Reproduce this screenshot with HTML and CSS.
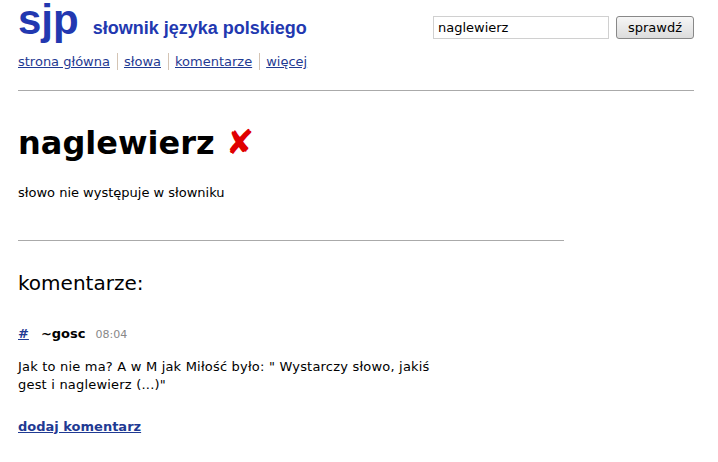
FILE: index.html
```html
<!DOCTYPE html>
<html lang="pl">
<head>
  <meta charset="UTF-8" />
  <title>naglewierz - słownik języka polskiego</title>
  <link rel="stylesheet" href="styles.css">
</head>
<body>
  <div class="page">
    <div class="header">
      <div class="brand">
        <div class="logo-row">
          <a class="logo" href="#">sjp</a>
          <span class="tagline">słownik języka polskiego</span>
        </div>
        <div class="nav">
          <a href="#">strona główna</a>
          <a href="#">słowa</a>
          <a href="#">komentarze</a>
          <a href="#">więcej</a>
        </div>
      </div>
      <form class="search" onsubmit="return false">
        <input type="text" value="naglewierz" />
        <button type="submit">sprawdź</button>
      </form>
    </div>
    <hr class="rule" />

    <h1 class="word">naglewierz <span class="cross">✘</span></h1>
    <p class="status">słowo nie występuje w słowniku</p>

    <hr class="rule short" />

    <h2 class="comments-title">komentarze:</h2>

    <div class="comment">
      <div class="comment-head">
        <a class="anchor" href="#">#</a>
        <span class="author">~gosc</span>
        <span class="time">08:04</span>
      </div>
      <p class="comment-body">Jak to nie ma? A w M jak Miłość było: " Wystarczy słowo, jakiś gest i naglewierz (...)"</p>
    </div>

    <a class="add-comment" href="#">dodaj komentarz</a>
  </div>
</body>
</html>
```

FILE: styles.css
```css
body {
  margin: 0;
  background: #fff;
  color: #000;
  font-family: 'DejaVu Sans', Verdana, sans-serif;
  font-size: 13px;
}

a { color: #1f3a93; }

.page {
  padding: 0 24px 0 18px;
}

.header {
  display: flex;
  justify-content: space-between;
  align-items: flex-start;
}

.logo-row {
  display: flex;
  align-items: baseline;
  height: 48px;
}

.logo {
  font-family: 'Liberation Sans', Arial, sans-serif;
  font-weight: bold;
  font-size: 42px;
  color: #2238b0;
  text-decoration: none;
  line-height: 40px;
}

.tagline {
  font-family: 'Liberation Sans', Arial, sans-serif;
  font-weight: bold;
  font-size: 18px;
  color: #2238b0;
  margin-left: 14px;
}

.nav {
  display: flex;
  margin-top: 5px;
  font-size: 13px;
}

.nav a {
  padding: 0 7px 0 6px;
  border-left: 1px solid #d4c4b4;
  line-height: 17px;
}

.nav a:first-child {
  padding-left: 0;
  border-left: none;
}

.search {
  display: flex;
  gap: 7px;
  margin-top: 16px;
}

.search input {
  width: 166px;
  height: 17px;
  padding: 2px 4px;
  border: 1px solid #d0d0d0;
  font-family: 'DejaVu Sans', Verdana, sans-serif;
  font-size: 13px;
}

.search button {
  height: 23px;
  padding: 0 11px;
  border: 1px solid #888;
  border-radius: 3px;
  background: linear-gradient(#f6f6f6, #dcdcdc);
  font-family: 'DejaVu Sans', Verdana, sans-serif;
  font-size: 13px;
}

.rule {
  border: none;
  border-top: 1px solid #aaa;
  margin: 20px 0 0;
}

.rule.short {
  width: 546px;
  margin: 40px 0 0;
}

.word {
  font-size: 32px;
  font-weight: bold;
  margin: 32px 0 0;
  line-height: 40px;
}

.cross {
  color: #e00000;
  font-weight: normal;
  font-size: 34px;
  line-height: 30px;
}

.status {
  margin: 22px 0 0;
}

.comments-title {
  font-size: 20px;
  font-weight: normal;
  margin: 30px 0 0;
}

.comment {
  margin-top: 31px;
  width: 420px;
}

.comment-head {
  display: flex;
  align-items: baseline;
  gap: 10px;
}

.anchor,
.author {
  font-weight: bold;
}

.author { margin-left: 2px; }

.time {
  font-size: 11px;
  color: #888;
}

.comment-body {
  margin: 17px 0 0;
  line-height: 18px;
  letter-spacing: 0.2px;
}

.add-comment {
  display: inline-block;
  margin-top: 25px;
  font-weight: bold;
}
```
